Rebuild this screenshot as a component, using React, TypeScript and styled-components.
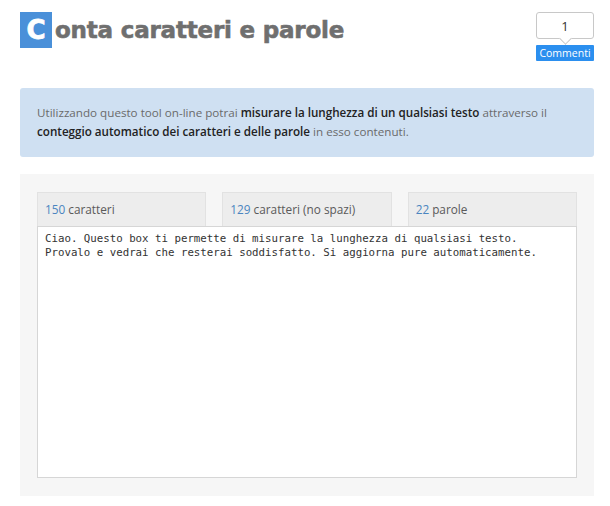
import { FC, useEffect, useRef } from 'react'
import styled, { createGlobalStyle } from 'styled-components'

const GlobalStyle = createGlobalStyle`
  body {
    margin: 0;
    background: #fff;
    font-family: 'Open Sans', 'Liberation Sans', sans-serif;
  }
`

const Page = styled.div`
  padding: 0 16px 0 20px;
`

const Header = styled.div`
  display: flex;
  justify-content: space-between;
  align-items: flex-start;
  height: 88px;
`

const Title = styled.h1`
  margin: 12px 0 0;
  display: flex;
  align-items: center;
  font-family: 'DejaVu Sans', 'Inter', sans-serif;
  font-weight: 700;
  font-size: 23px;
  letter-spacing: -0.2px;
  color: #6f6f6f;
  -webkit-text-stroke: 0.6px #6f6f6f;
  height: 36px;
`

const Initial = styled.span`
  display: inline-flex;
  align-items: center;
  justify-content: center;
  width: 32px;
  height: 36px;
  margin-right: 3px;
  background: #4a90d9;
  color: #fff;
  -webkit-text-stroke: 0.8px #fff;
  font-size: 26px;
`

const CommentWidget = styled.div`
  margin-top: 12px;
  display: flex;
  flex-direction: column;
  align-items: center;
  width: 58px;
`

const Bubble = styled.div`
  position: relative;
  box-sizing: border-box;
  width: 58px;
  height: 27px;
  border: 1px solid #c8c8c8;
  border-radius: 3px;
  background: #fff;
  display: flex;
  align-items: center;
  justify-content: center;
  font-size: 13px;
  color: #333;

  &::after {
    content: '';
    position: absolute;
    left: 50%;
    bottom: -5px;
    width: 8px;
    height: 8px;
    margin-left: -4px;
    background: #fff;
    border-right: 1px solid #c8c8c8;
    border-bottom: 1px solid #c8c8c8;
    transform: rotate(45deg);
  }
`

const CommentButton = styled.div`
  margin-top: 6px;
  width: 58px;
  height: 16px;
  background: #2b8fef;
  color: #fff;
  font-size: 10.5px;
  line-height: 16px;
  text-align: center;
  border-radius: 1px;
`

const Info = styled.div`
  box-sizing: border-box;
  height: 69px;
  background: #cfe0f2;
  border-radius: 3px;
  padding: 15px 17px 0;
  font-size: 11.65px;
  line-height: 19px;
  color: #6a6a6a;

  b {
    font-weight: 600;
    color: #222;
  }
`

const Panel = styled.div`
  margin-top: 17px;
  background: #f6f6f6;
  padding: 18px 17px 18px;
`

const Tabs = styled.div`
  display: grid;
  grid-template-columns: repeat(3, 1fr);
  gap: 16px;
`

const Tab = styled.div`
  box-sizing: border-box;
  height: 34px;
  background: #ededed;
  border: 1px solid #e2e2e2;
  border-bottom: none;
  display: flex;
  align-items: center;
  padding-left: 7px;
  padding-bottom: 1px;
  font-size: 11.8px;
  color: #5a5a5a;
`

const Count = styled.span`
  color: #4b85c0;
  margin-right: 3px;
`

const TextArea = styled.textarea`
  display: block;
  box-sizing: border-box;
  width: 100%;
  height: 252px;
  margin: 0;
  resize: none;
  border: 1px solid #d6d6d6;
  background: #fff;
  padding: 5px 7px;
  font-family: 'DejaVu Sans Mono', 'Liberation Mono', monospace;
  font-size: 10.75px;
  line-height: 14px;
  color: #333;
  outline: none;
  caret-color: #222;
`

const text =
  'Ciao. Questo box ti permette di misurare la lunghezza di qualsiasi testo.\nProvalo e vedrai che resterai soddisfatto. Si aggiorna pure automaticamente.'

const App: FC = () => {
  const ref = useRef<HTMLTextAreaElement>(null)
  const chars = text.replace(/\n/g, ' ').length
  const noSpaces = text.replace(/\s/g, '').length
  const words = text.trim().split(/\s+/).length

  useEffect(() => {
    const el = ref.current
    if (el) {
      el.focus()
      el.setSelectionRange(text.length, text.length)
    }
  }, [])

  return (
    <Page>
      <GlobalStyle />
      <Header>
        <Title>
          <Initial>C</Initial>onta caratteri e parole
        </Title>
        <CommentWidget>
          <Bubble>1</Bubble>
          <CommentButton>Commenti</CommentButton>
        </CommentWidget>
      </Header>
      <Info>
        Utilizzando questo tool on-line potrai <b>misurare la lunghezza di un qualsiasi testo</b> attraverso il{' '}
        <b>conteggio automatico dei caratteri e delle parole</b> in esso contenuti.
      </Info>
      <Panel>
        <Tabs>
          <Tab><Count>{chars}</Count>caratteri</Tab>
          <Tab><Count>{noSpaces}</Count>caratteri (no spazi)</Tab>
          <Tab><Count>{words}</Count>parole</Tab>
        </Tabs>
        <TextArea ref={ref} defaultValue={text} spellCheck={false} />
      </Panel>
    </Page>
  )
}

export default App
